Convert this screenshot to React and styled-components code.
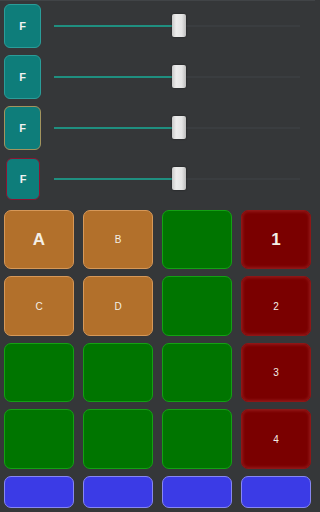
import React from "react";
import styled, { createGlobalStyle } from "styled-components";

const Global = createGlobalStyle`
  html, body { margin: 0; padding: 0; background: #353739; }
  body { font-family: "Liberation Sans", Arial, sans-serif; }
`;

const Page = styled.div`
  width: 315px;
  height: 512px;
  box-sizing: border-box;
  padding: 4px 4px 0 4px;
  background: #353739;
  box-shadow: inset 0 1px 0 #414447;
  overflow: hidden;
`;

const Faders = styled.div`
  display: flex;
  flex-direction: column;
  gap: 7px;
`;

const FaderRow = styled.div`
  display: flex;
  align-items: center;
  height: 44px;
`;

const FButton = styled.div`
  box-sizing: border-box;
  flex: none;
  width: ${(p) => (p.$inset ? "34px" : "37px")};
  height: ${(p) => (p.$inset ? "42px" : "44px")};
  margin-left: ${(p) => (p.$inset ? "2px" : "0")};
  margin-right: ${(p) => (p.$inset ? "1px" : "0")};
  border-radius: 6px;
  background: #0e7d7a;
  border: 1.5px solid ${(p) => p.$border};
  display: flex;
  align-items: center;
  justify-content: center;
  color: #f2f2f2;
  font-weight: bold;
  font-size: 11px;
`;

const Track = styled.div`
  position: relative;
  flex: 1;
  margin-left: 13px;
  margin-right: 11px;
  height: 2px;
  background: #3a3d40;
`;

const Fill = styled.div`
  height: 100%;
  background: #1f8f80;
`;

const Thumb = styled.div`
  position: absolute;
  top: -11px;
  width: 14px;
  height: 23px;
  margin-left: -1px;
  box-sizing: border-box;
  border-radius: 2px;
  background: linear-gradient(90deg, #c9c9c9, #ececec 30%, #e4e4e4 70%, #bdbdbd);
  box-shadow: 0 0 2px rgba(0, 0, 0, 0.6);
`;

const Grid = styled.div`
  margin-top: 9px;
  display: grid;
  grid-template-columns: repeat(4, 70px);
  grid-template-rows: 59px 60px 59px 60px 32px;
  column-gap: 9px;
  row-gap: 7px;
`;

const palette = {
  orange: { bg: "#b2702b", border: "#d69858", glow: "none" },
  green: { bg: "#007500", border: "#13a113", glow: "none" },
  red: { bg: "#7a0000", border: "#8e1616", glow: "inset 0 0 3px 1px #931818" },
  blue: { bg: "#3b3be6", border: "#8787f2", glow: "none" },
};

const Pad = styled.div`
  box-sizing: border-box;
  border-radius: 7px;
  background: ${(p) => palette[p.$color].bg};
  border: 1.5px solid ${(p) => palette[p.$color].border};
  box-shadow: ${(p) => palette[p.$color].glow};
  display: flex;
  align-items: center;
  justify-content: center;
  color: #f4efe6;
  font-weight: ${(p) => (p.$big ? "bold" : "normal")};
  font-size: ${(p) => (p.$big ? "17px" : "10px")};
`;

const faders = [
  { border: "#2a9d99", value: 0.482 },
  { border: "#2a9d99", value: 0.482 },
  { border: "#a3945e", value: 0.482 },
  { border: "#8b1432", value: 0.482, inset: true },
];

const pads = [
  { c: "orange", t: "A", big: true },
  { c: "orange", t: "B" },
  { c: "green" },
  { c: "red", t: "1", big: true },
  { c: "orange", t: "C" },
  { c: "orange", t: "D" },
  { c: "green" },
  { c: "red", t: "2" },
  { c: "green" },
  { c: "green" },
  { c: "green" },
  { c: "red", t: "3" },
  { c: "green" },
  { c: "green" },
  { c: "green" },
  { c: "red", t: "4" },
  { c: "blue" },
  { c: "blue" },
  { c: "blue" },
  { c: "blue" },
];

export default function App() {
  return (
    <>
      <Global />
      <Page>
        <Faders>
          {faders.map((f, i) => (
            <FaderRow key={i}>
              <FButton $border={f.border} $inset={f.inset}>F</FButton>
              <Track>
                <Fill style={{ width: `${f.value * 100}%` }} />
                <Thumb style={{ left: `${f.value * 100}%` }} />
              </Track>
            </FaderRow>
          ))}
        </Faders>
        <Grid>
          {pads.map((p, i) => (
            <Pad key={i} $color={p.c} $big={p.big}>
              {p.t}
            </Pad>
          ))}
        </Grid>
      </Page>
    </>
  );
}
